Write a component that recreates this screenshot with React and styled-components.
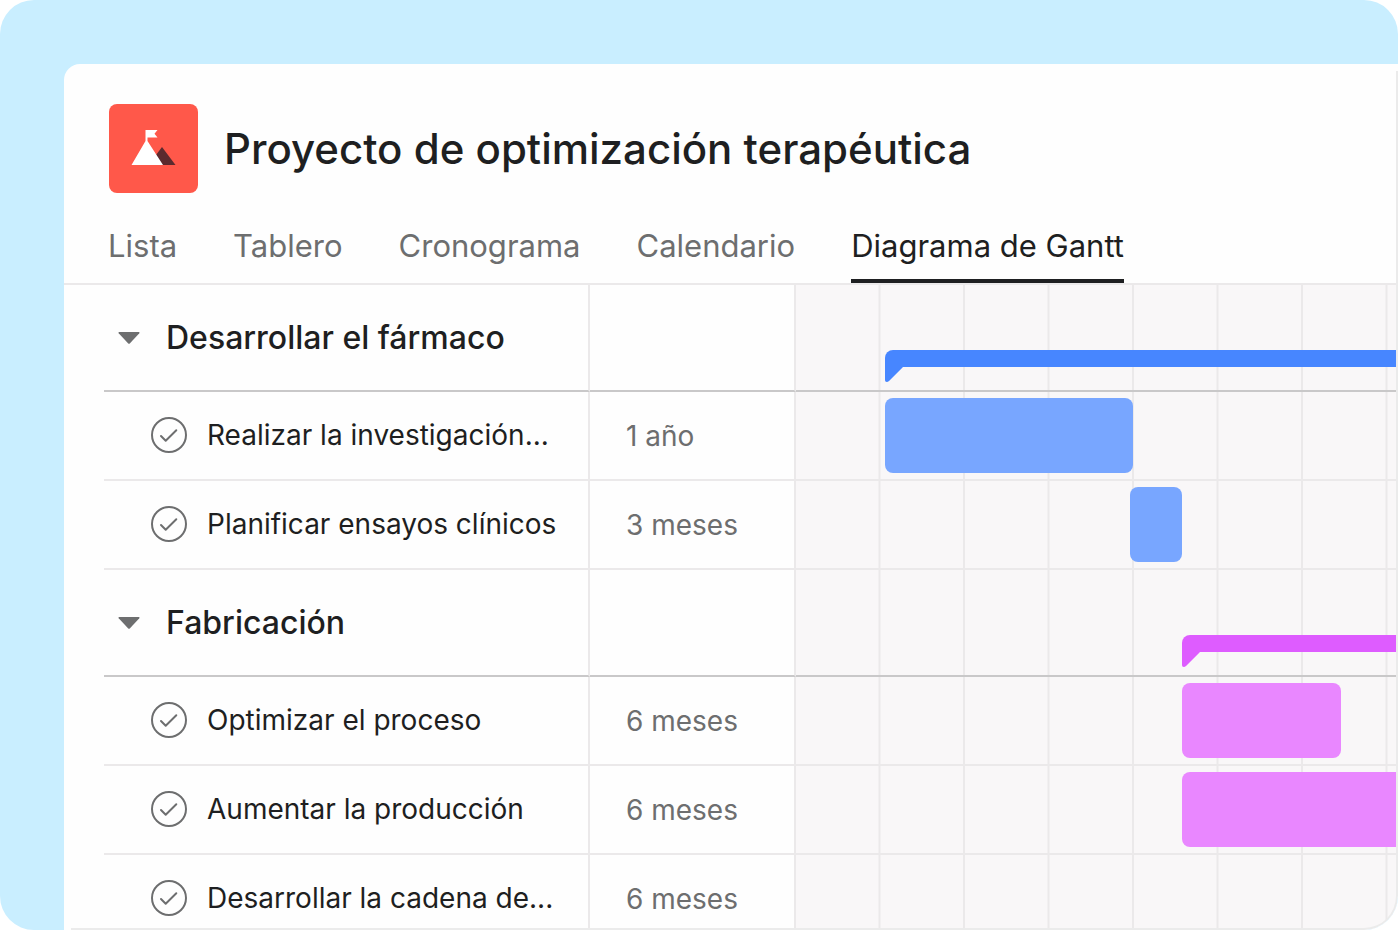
import React from "react";
import styled, { createGlobalStyle } from "styled-components";

const GlobalStyle = createGlobalStyle`
    *, *::before, *::after {
        box-sizing: border-box;
    }

    body {
        margin: 0;
        background: #ffffff;
        color: #1e1f21;
        font-family: Inter, "Liberation Sans", sans-serif;
    }

    button {
        padding: 0;
        border: 0;
        background: none;
        color: inherit;
        font: inherit;
        cursor: pointer;
    }
`;

const Frame = styled.main`
    display: flex;
    height: calc(100vh - 1px);
    padding: 64px 0 0 64px;
    border-radius: 34px;
    background: #c9eeff;
    overflow: hidden;
`;

const Window = styled.section`
    position: relative;
    flex: 1;
    min-width: 0;
    padding-right: 2px;
    border-radius: 16px 0 34px 0;
    background: #fefefe;
    overflow: hidden;

    /* hairline that closes the right and bottom edges */
    &::after {
        content: "";
        position: absolute;
        inset: 7px 0 0 7px;
        border: solid #ebebeb;
        border-width: 0 2px 2px 0;
        border-radius: 0 0 34px 0;
        pointer-events: none;
    }
`;

const Header = styled.header`
    display: flex;
    align-items: center;
    gap: 26px;
    padding: 40px 45px 0;
`;

const ProjectIcon = styled.div`
    flex: none;
    width: 89px;
    height: 89px;
    border-radius: 8px;
    background: #ff584a;

    svg {
        display: block;
    }
`;

const Title = styled.h1`
    margin: 0;
    font-size: 42px;
    font-weight: 500;
    line-height: 52px;
    white-space: nowrap;
`;

const Tabs = styled.nav`
    display: flex;
    gap: 56px;
    padding: 22px 44px 0;
    border-bottom: 2px solid #ebe9ea;
`;

const Tab = styled.button`
    height: 68px;
    padding-bottom: ${({ $active }) => ($active ? "4px" : "8px")};
    border-bottom: ${({ $active }) => ($active ? "4px solid #1e1f21" : "0")};
    color: ${({ $active }) => ($active ? "#1e1f21" : "#6d6e6f")};
    font-size: 31px;
    white-space: nowrap;
`;

const Plan = styled.table`
    width: calc(100% - 40px);
    margin-left: 40px;
    border-collapse: separate;
    border-spacing: 0;
    table-layout: fixed;
`;

const NameCol = styled.col`
    width: 486px;
`;

const DurationCol = styled.col`
    width: 206px;
`;

const Row = styled.tr`
    height: ${({ $group }) => ($group ? "107px" : "89px")};

    > * {
        padding: 0;
        border-bottom: 2px solid ${({ $group }) => ($group ? "#c9c8c9" : "#ebe9ea")};
        text-align: left;
    }
`;

const NameCell = styled.th`
    border-right: 2px solid #ebe9ea;
    font-weight: 400;
`;

const DurationCell = styled.td`
    border-right: 2px solid #ebe9ea;
    color: #6d6e6f;
    font-size: 28px;

    span {
        padding-left: 36px;
    }
`;

/* seven month columns and the start of the eighth */
const ChartCell = styled.td`
    background-color: #f9f7f8;
    background-image: linear-gradient(to left, #ebe9ea 2px, transparent 2px);
    background-size: calc(100% * 169 / 1200) 100%;
    vertical-align: top;
`;

const GroupName = styled.div`
    display: flex;
    align-items: center;
    gap: 26px;
    padding-left: 14px;
    font-size: 32px;
    font-weight: 500;
    white-space: nowrap;
`;

const TaskName = styled.div`
    display: flex;
    align-items: center;
    gap: 20px;
    padding: 0 0 2px 47px;
    font-size: 28px;
    white-space: nowrap;
`;

const IconButton = styled.button`
    display: flex;
    color: #6d6e6f;
`;

const TaskBar = styled.div`
    height: 75px;
    margin-top: 6px;
    border-radius: ${({ $open }) => ($open ? "8px 0 0 8px" : "8px")};
    background: ${({ $color }) => $color};
`;

const Summary = styled.div`
    margin-top: 65px;
    color: ${({ $color }) => $color};

    &::before {
        content: "";
        display: block;
        height: 17px;
        border-radius: 8px 0 0 0;
        background: currentColor;
    }

    svg {
        display: block;
    }
`;

// the chart shows this many units from its left to its right edge
const AXIS = 600;

const percent = (units) => `${(units / AXIS) * 100}%`;

const tabs = ["Lista", "Tablero", "Cronograma", "Calendario", "Diagrama de Gantt"];

const groups = [
  {
    name: "Desarrollar el fármaco",
    color: "#4786ff",
    start: 89,
    tasks: [
      { name: "Realizar la investigación...", duration: "1 año", color: "#78a6ff", start: 89, end: 337 },
      { name: "Planificar ensayos clínicos", duration: "3 meses", color: "#78a6ff", start: 334, end: 386 },
    ],
  },
  {
    name: "Fabricación",
    color: "#de5cff",
    start: 386,
    tasks: [
      { name: "Optimizar el proceso", duration: "6 meses", color: "#e987ff", start: 386, end: 545 },
      { name: "Aumentar la producción", duration: "6 meses", color: "#e987ff", start: 386, end: AXIS },
      { name: "Desarrollar la cadena de...", duration: "6 meses" },
    ],
  },
];

function MountainIcon() {
  return (
    <svg width="89" height="89" viewBox="0 0 89 89" aria-hidden="true">
      <path d="M44 55 53 43 66.500 61H52Z" fill="#5c2a2e" />
      <path d="M36.500 26H48.500L45.500 29.800 48.500 33.500H38.500V37L54 61H22.500L36.500 37Z" fill="#ffffff" />
    </svg>
  );
}

function CaretIcon() {
  return (
    <svg width="22" height="14" viewBox="0 0 22 14" aria-hidden="true">
      <path d="M1 1H21Q22 1.300 21.300 2.200L12 12.200Q11 13.200 10 12.200L0.700 2.200Q0 1.300 1 1Z" fill="currentColor" />
    </svg>
  );
}

function CheckIcon() {
  return (
    <svg width="36" height="36" viewBox="0 0 36 36" fill="none" stroke="currentColor" strokeWidth="2" aria-hidden="true">
      <circle cx="18" cy="18" r="17" />
      <path d="M10 19 14.700 23.700 25.300 13.200" strokeLinecap="round" strokeLinejoin="round" />
    </svg>
  );
}

function GroupRow({ group }) {
  return (
    <Row $group>
      <NameCell scope="row">
        <GroupName>
          <IconButton type="button" aria-label={`Contraer ${group.name}`}>
            <CaretIcon />
          </IconButton>
          {group.name}
        </GroupName>
      </NameCell>
      <DurationCell />
      <ChartCell>
        <Summary $color={group.color} style={{ marginLeft: percent(group.start) }}>
          <svg width="18" height="15" viewBox="0 0 18 15" aria-hidden="true">
            <path d="M0 0H18L4 14Q2.500 15.300 1 14.800Q0 14.500 0 13Z" fill="currentColor" />
          </svg>
        </Summary>
      </ChartCell>
    </Row>
  );
}

function TaskRow({ task }) {
  return (
    <Row>
      <NameCell scope="row">
        <TaskName>
          <IconButton type="button" aria-label={`Completar ${task.name}`}>
            <CheckIcon />
          </IconButton>
          {task.name}
        </TaskName>
      </NameCell>
      <DurationCell>
        <span>{task.duration}</span>
      </DurationCell>
      <ChartCell>
        {task.end && (
          <TaskBar
            $color={task.color}
            $open={task.end === AXIS}
            style={{ marginLeft: percent(task.start), width: percent(task.end - task.start) }}
          />
        )}
      </ChartCell>
    </Row>
  );
}

function App() {
  return (
    <>
      <GlobalStyle />
      <Frame>
        <Window>
          <Header>
            <ProjectIcon>
              <MountainIcon />
            </ProjectIcon>
            <Title>Proyecto de optimización terapéutica</Title>
          </Header>
          <Tabs>
            {tabs.map((tab) => (
              <Tab key={tab} type="button" $active={tab === "Diagrama de Gantt"}>
                {tab}
              </Tab>
            ))}
          </Tabs>
          <Plan>
            <colgroup>
              <NameCol />
              <DurationCol />
              <col />
            </colgroup>
            <tbody>
              {groups.map((group) => (
                <React.Fragment key={group.name}>
                  <GroupRow group={group} />
                  {group.tasks.map((task) => (
                    <TaskRow key={task.name} task={task} />
                  ))}
                </React.Fragment>
              ))}
            </tbody>
          </Plan>
        </Window>
      </Frame>
    </>
  );
}

export default App;
